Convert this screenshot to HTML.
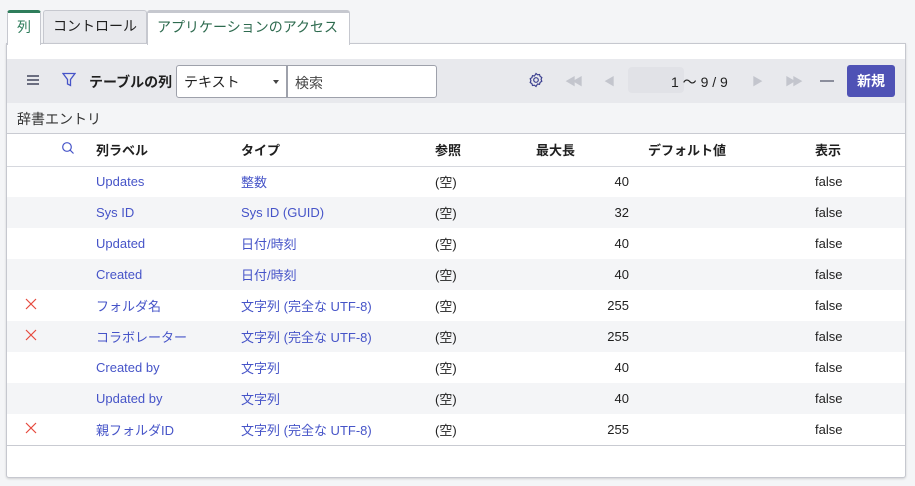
<!DOCTYPE html>
<html><head><meta charset="utf-8"><style>
*{box-sizing:border-box;margin:0;padding:0}
body{width:915px;height:486px;background:#f4f5f7;font-family:"Liberation Sans","Noto Sans CJK JP",sans-serif;font-size:13px;color:#1f1f1f;position:relative;overflow:hidden}
.tab{position:absolute;top:10px;height:34px;border:1px solid #c6c8cf;border-bottom:none;border-radius:3px 3px 0 0;font-size:14px;line-height:30px;padding:0 9px}
.panel{position:absolute;left:6px;top:43px;width:900px;height:435px;background:#fff;border:1px solid #c6c8cf;border-radius:0 0 3px 3px;box-shadow:0 1px 2px rgba(0,0,0,.15)}
.tb{position:absolute;left:7px;top:59px;width:898px;height:44px;background:#e8e9ed}
.sub{position:absolute;left:7px;top:103px;width:898px;height:31px;background:#f4f5f7;border-bottom:1px solid #c9cbd2;padding:6px 10px;font-size:14px;color:#333}
table{position:absolute;left:7px;top:134px;width:898px;border-collapse:collapse}
td,th{height:31px;font-size:13px;padding:0;white-space:nowrap}
th{height:32px;text-align:left;font-weight:bold;border-bottom:1px solid #d6d8de}
tr.g td{background:#f4f5f7}
tr:last-child td{border-bottom:1px solid #c9cbd2}
.l{color:#4654c8}
.x{text-align:center}
.r{text-align:right;padding-right:0}
</style></head><body>
<div class="tab" style="left:7px;width:34px;background:#fff;border-top:3px solid #2e7d5b;color:#2e7d5b;line-height:28px;height:35px;z-index:2">列</div>
<div class="tab" style="left:43px;width:104px;background:#e8e9ed">コントロール</div>
<div class="tab" style="left:147px;width:203px;background:#fff;border-top:3px solid #c6c8cf;color:#2e6b4f;line-height:28px;height:35px;z-index:2">アプリケーションのアクセス</div>
<div class="panel"></div>
<div class="tb">
 <div style="position:absolute;left:20px;top:16px;width:12px;height:10px;border-top:2px solid #6b6e80;border-bottom:2px solid #6b6e80"><div style="margin-top:2px;border-top:2px solid #6b6e80"></div></div>
 <svg style="position:absolute;left:55px;top:13px" width="14" height="15" viewBox="0 0 14 15"><path d="M1 1.5H13L8.5 7.5V13.5L5.5 12V7.5Z" fill="none" stroke="#4654c8" stroke-width="1.3"/></svg>
 <div style="position:absolute;left:82px;top:13px;font-weight:bold;font-size:14px">テーブルの列</div>
 <div style="position:absolute;left:169px;top:6px;width:111px;height:33px;background:#fff;border:1px solid #9ea1ab;border-radius:3px 0 0 3px;padding:6px 7px;font-size:14px">テキスト<span style="position:absolute;right:7px;top:14px;border:3px solid transparent;border-top:4px solid #444"></span></div>
 <div style="position:absolute;left:280px;top:6px;width:150px;height:33px;background:#fff;border:1px solid #9ea1ab;border-radius:0 3px 3px 0;padding:7px 7px;font-size:14px;color:#444">検索</div>
 <svg style="position:absolute;left:521px;top:13px" width="16" height="16" viewBox="0 0 16 16"><circle cx="8" cy="8" r="2.3" fill="none" stroke="#3c4090" stroke-width="1.2"/><path d="M8 1.5l1.5 1.3 2-.3.6 1.9 1.7 1.1-.7 1.9.7 1.9-1.7 1.1-.6 1.9-2-.3L8 14.5l-1.5-1.3-2 .3-.6-1.9-1.7-1.1.7-1.9-.7-1.9 1.7-1.1.6-1.9 2 .3z" fill="none" stroke="#3c4090" stroke-width="1.2"/></svg>
 <div style="position:absolute;left:558px;top:14px;color:#c3c5cd;font-size:11px;letter-spacing:-4px">◀◀</div>
 <div style="position:absolute;left:597px;top:14px;color:#c3c5cd;font-size:11px">◀</div>
 <div style="position:absolute;left:621px;top:8px;width:56px;height:26px;background:#e1e2e7;border-radius:4px"></div>
 <div style="position:absolute;left:664px;top:13px;font-size:14px">1 〜 9 / 9</div>
 <div style="position:absolute;left:745px;top:14px;color:#c3c5cd;font-size:11px">▶</div>
 <div style="position:absolute;left:778px;top:14px;color:#c3c5cd;font-size:11px;letter-spacing:-4px">▶▶</div>
 <div style="position:absolute;left:813px;top:21px;width:14px;height:2px;background:#8b8e9c"></div>
 <div style="position:absolute;left:840px;top:6px;width:48px;height:32px;background:#4f52b5;border-radius:3px;color:#fff;font-weight:bold;font-size:14px;text-align:center;line-height:32px">新規</div>
</div>
<div class="sub">辞書エントリ</div>
<table>
<colgroup><col style="width:47px"><col style="width:42px"><col style="width:145px"><col style="width:194px"><col style="width:101px"><col style="width:93px"><col style="width:186px"><col></colgroup>
<tr><th></th><th><svg width="14" height="14" viewBox="0 0 14 14" style="margin-left:7px"><circle cx="6" cy="6" r="4.3" fill="none" stroke="#4654c8" stroke-width="1.2"/><path d="M9.2 9.2L12.5 12.5" stroke="#4654c8" stroke-width="1.2"/></svg></th><th>列ラベル</th><th>タイプ</th><th>参照</th><th>最大長</th><th style="padding-left:19px">デフォルト値</th><th>表示</th></tr>
<tr><td></td><td></td><td class="l">Updates</td><td class="l">整数</td><td>(空)</td><td class="r">40</td><td></td><td>false</td></tr>
<tr class="g"><td></td><td></td><td class="l">Sys ID</td><td class="l">Sys ID (GUID)</td><td>(空)</td><td class="r">32</td><td></td><td>false</td></tr>
<tr><td></td><td></td><td class="l">Updated</td><td class="l">日付/時刻</td><td>(空)</td><td class="r">40</td><td></td><td>false</td></tr>
<tr class="g"><td></td><td></td><td class="l">Created</td><td class="l">日付/時刻</td><td>(空)</td><td class="r">40</td><td></td><td>false</td></tr>
<tr><td class="x"><svg width="12" height="12" viewBox="0 0 12 12"><path d="M1 1L11 11M11 1L1 11" stroke="#e5493d" stroke-width="1.2"/></svg></td><td></td><td class="l">フォルダ名</td><td class="l">文字列 (完全な UTF-8)</td><td>(空)</td><td class="r">255</td><td></td><td>false</td></tr>
<tr class="g"><td class="x"><svg width="12" height="12" viewBox="0 0 12 12"><path d="M1 1L11 11M11 1L1 11" stroke="#e5493d" stroke-width="1.2"/></svg></td><td></td><td class="l">コラボレーター</td><td class="l">文字列 (完全な UTF-8)</td><td>(空)</td><td class="r">255</td><td></td><td>false</td></tr>
<tr><td></td><td></td><td class="l">Created by</td><td class="l">文字列</td><td>(空)</td><td class="r">40</td><td></td><td>false</td></tr>
<tr class="g"><td></td><td></td><td class="l">Updated by</td><td class="l">文字列</td><td>(空)</td><td class="r">40</td><td></td><td>false</td></tr>
<tr><td class="x"><svg width="12" height="12" viewBox="0 0 12 12"><path d="M1 1L11 11M11 1L1 11" stroke="#e5493d" stroke-width="1.2"/></svg></td><td></td><td class="l">親フォルダID</td><td class="l">文字列 (完全な UTF-8)</td><td>(空)</td><td class="r">255</td><td></td><td>false</td></tr>
</table>
</body></html>
